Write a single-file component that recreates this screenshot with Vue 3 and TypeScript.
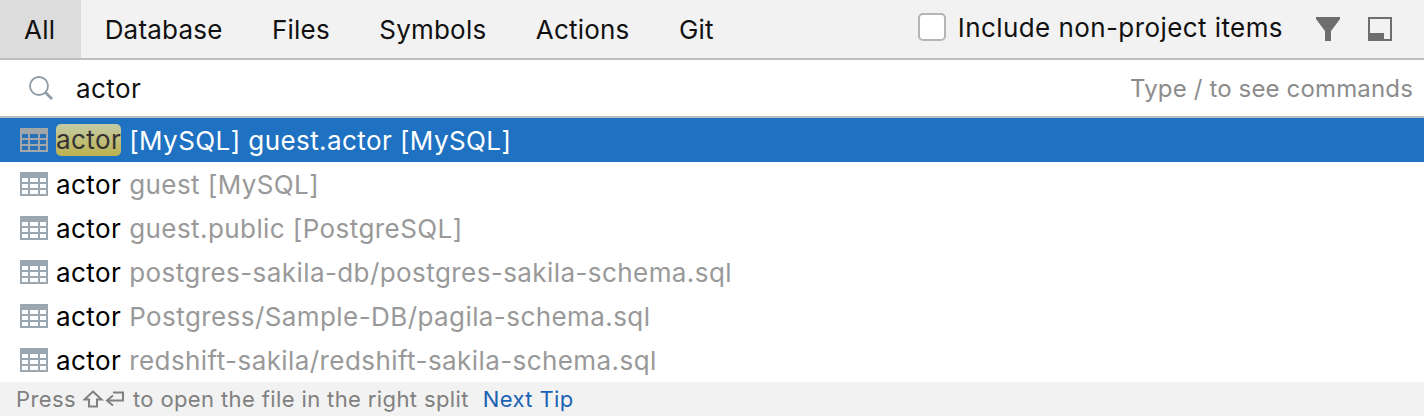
<template>
  <div class="popup">
    <header class="tabs">
      <div
        v-for="(tab, i) in tabs"
        :key="tab"
        class="tab"
        :class="{ active: i === 0 }"
      >
        {{ tab }}
      </div>
      <div class="tools">
        <label class="check">
          <span class="box"></span>
          <span>Include non-project items</span>
        </label>
        <svg class="filter" width="24" height="24" viewBox="0 0 24 24">
          <path d="M0 0H24V2L15 14V24H9V14L0 2Z" fill="#6e6e6e" />
        </svg>
        <svg class="pin" width="24" height="24" viewBox="0 0 24 24">
          <path d="M0 0H24V24H0ZM2 2V22H22V2Z" fill="#6e6e6e" fill-rule="evenodd" />
          <rect x="2" y="16" width="14" height="6" fill="#6e6e6e" />
        </svg>
      </div>
    </header>

    <div class="search">
      <svg width="26" height="26" viewBox="0 0 26 26" fill="none" stroke="#8f9ba5">
        <circle cx="11" cy="11" r="9" stroke-width="1.800" />
        <path d="M17.500 17.500L24 24" stroke-width="2.800" />
      </svg>
      <span class="query">actor</span>
      <span class="hint">Type / to see commands</span>
    </div>

    <ul class="results">
      <li
        v-for="(row, i) in rows"
        :key="i"
        class="row"
        :class="{ selected: i === 0 }"
      >
        <svg class="table-icon" width="28" height="24" viewBox="0 0 28 24">
          <rect width="28" height="24" class="icon-bg" />
          <g class="icon-cells">
            <template v-for="y in [6, 12, 18]" :key="y">
              <rect x="2" :y="y" width="6" height="4" />
              <rect x="10" :y="y" width="8" height="4" />
              <rect x="20" :y="y" width="6" height="4" />
            </template>
          </g>
        </svg>
        <span class="name">actor</span>
        <span class="loc">{{ row }}</span>
      </li>
    </ul>

    <footer class="tip">
      <span class="press">
        Press
        <svg class="keys" width="42" height="18" viewBox="0 0 42 18" fill="none" stroke="#808080" stroke-width="2">
          <path d="M10 1.500L18.500 9.500H14V16.500H6V9.500H1.500Z" />
          <path d="M30 2.500H40V10.500H25" />
          <path d="M30 5.500L24 10.500L30 15.500" />
        </svg>
        to open the file in the right split
      </span>
      <a class="next">Next Tip</a>
    </footer>
  </div>
</template>

<script setup lang="ts">
const tabs: string[] = ['All', 'Database', 'Files', 'Symbols', 'Actions', 'Git']

const rows: string[] = [
  '[MySQL] guest.actor [MySQL]',
  'guest [MySQL]',
  'guest.public [PostgreSQL]',
  'postgres-sakila-db/postgres-sakila-schema.sql',
  'Postgress/Sample-DB/pagila-schema.sql',
  'redshift-sakila/redshift-sakila-schema.sql',
]
</script>

<style>
html,
body {
  margin: 0;
  background: #fff;
}
</style>

<style scoped>
.popup {
  width: 1424px;
  height: 416px;
  overflow: hidden;
  display: flex;
  flex-direction: column;
  font-family: Inter, 'Liberation Sans', sans-serif;
  font-size: 26px;
  letter-spacing: 0.42px;
  color: #111;
}

.tabs {
  height: 58px;
  flex: none;
  display: flex;
  align-items: center;
  background: #f2f2f2;
  border-bottom: 2px solid #bdbdbd;
}

.tab {
  height: 100%;
  display: flex;
  align-items: center;
  padding: 0 25.500px 0 24px;
  letter-spacing: 0.2px;
}

.tab.active {
  background: #dcdcdc;
}

.tools {
  margin-left: auto;
  display: flex;
  align-items: center;
  padding-right: 32px;
}

.check {
  display: flex;
  align-items: center;
  gap: 12px;
  margin-bottom: 4px;
}

.box {
  width: 28px;
  height: 28px;
  box-sizing: border-box;
  background: #fff;
  border: 2px solid #b5b5b5;
  border-radius: 5px;
}

.filter {
  margin-left: 33px;
}

.pin {
  margin-left: 28px;
}

.search {
  height: 56px;
  flex: none;
  display: flex;
  align-items: center;
  padding: 0 11px 0 28px;
  border-bottom: 2px solid #bdbdbd;
}

.query {
  margin-left: 22px;
}

.hint {
  margin-left: auto;
  color: #8c8c8c;
  font-size: 24px;
  letter-spacing: 0.15px;
}

.results {
  flex: 1;
  margin: 0;
  padding: 0;
  list-style: none;
}

.row {
  height: 44px;
  display: flex;
  align-items: center;
  padding-left: 20px;
  white-space: nowrap;
}

.table-icon {
  flex: none;
  margin-right: 8px;
}

.icon-bg {
  fill: #9aa7b0;
}

.icon-cells {
  fill: #fff;
}

.name {
  color: #000;
  margin-right: 8px;
}

.loc {
  color: #999;
}

.row.selected {
  background: #1f72c2;
}

.row.selected .icon-bg {
  fill: #a0a6aa;
}

.row.selected .icon-cells {
  fill: #2a70b6;
}

.row.selected .name {
  height: 32px;
  line-height: 32px;
  border-radius: 5px;
  color: #333;
  background: linear-gradient(#c4cba6, #bdb24f);
}

.row.selected .loc {
  color: #fff;
}

.tip {
  height: 34px;
  flex: none;
  display: flex;
  align-items: center;
  gap: 14px;
  padding-left: 16px;
  background: #f2f2f2;
  color: #808080;
  font-size: 22px;
  letter-spacing: 0.38px;
}

.press {
  display: flex;
  align-items: center;
  gap: 7.500px;
}

.keys {
  flex: none;
}

.next {
  color: #1a62b5;
}
</style>
